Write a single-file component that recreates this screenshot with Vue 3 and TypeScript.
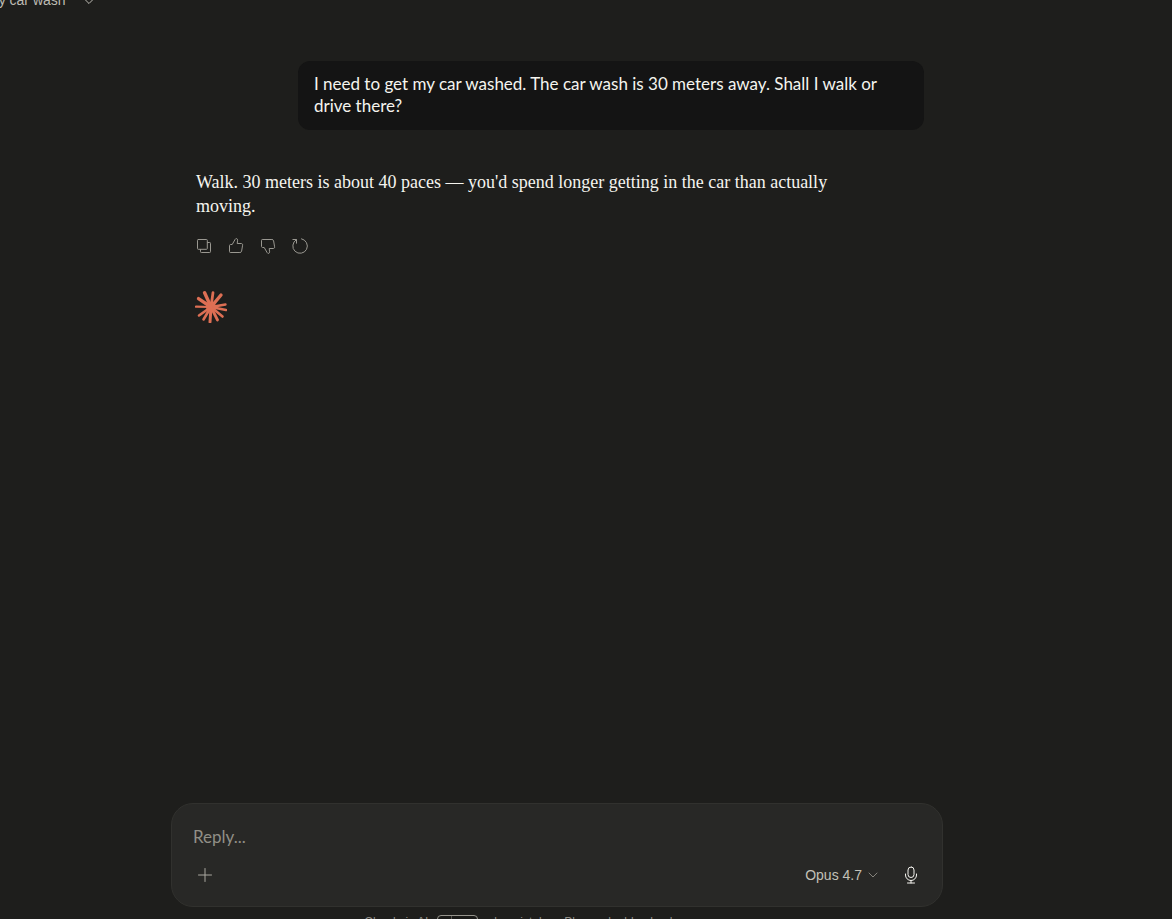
<script setup lang="ts">
import { ref } from 'vue'

const reply = ref('')
const rays: string[] = [
  'M16 16 L9.6 1.8', 'M16 16 L18 1.6', 'M16 16 L26 4', 'M16 16 L30.5 13.5',
  'M16 16 L31 19', 'M16 16 L27.5 25.5', 'M16 16 L22.5 29', 'M16 16 L15 31',
  'M16 16 L8.5 28.5', 'M16 16 L4 24.5', 'M16 16 L1 15.6', 'M16 16 L3.5 7.6',
]
const widths: number[] = [3.4, 2.8, 3.4, 2.4, 2.6, 2.6, 2.8, 3, 2.6, 2.6, 2.2, 3.4]
</script>

<template>
  <div class="page">
    <header class="topbar">
      <button class="title" type="button">
        <span>My car wash</span>
        <svg width="14" height="14" viewBox="0 0 14 14"><path d="M3 6.500l4 4 4-4" /></svg>
      </button>
    </header>

    <main class="thread">
      <p class="question">I need to get my car washed. The car wash is 30 meters away. Shall I walk or drive there?</p>
      <p class="answer">Walk. 30 meters is about 40 paces — you'd spend longer getting in the car than actually moving.</p>
      <div class="actions">
        <button type="button" aria-label="Copy">
          <svg width="20" height="20" viewBox="0 0 20 20"><path d="M4.300 3.500h8.200a.8.8 0 0 1 .8.8v8.200a.8.8 0 0 1-.8.8H4.300a.8.8 0 0 1-.8-.8V4.300a.8.8 0 0 1 .8-.8zM13.500 6.500h2.200a.8.8 0 0 1 .8.8v8.400a.8.8 0 0 1-.8.8H7.300a.8.8 0 0 1-.8-.8v-2.200" /></svg>
        </button>
        <button type="button" aria-label="Good response">
          <svg width="20" height="20" viewBox="0 0 20 20"><path d="M3.500 9.500C3.500 8.900 3.900 8.500 4.500 8.500H6.200L9.200 3.300C9.800 2 11.800 2.500 11.600 4.200L11.200 7.500h4.100c1 0 1.500.8 1.300 1.700l-1 6c-.2.900-.8 1.300-1.700 1.300H4.200a.7.7 0 0 1-.7-.7z" /></svg>
        </button>
        <button type="button" aria-label="Bad response">
          <svg width="20" height="20" viewBox="0 0 20 20"><path d="M3.500 10.500C3.500 11.100 3.900 11.500 4.500 11.500H6.200L9.200 16.700C9.800 18 11.800 17.500 11.600 15.800L11.200 12.500h4.100c1 0 1.500-.8 1.300-1.700l-1-6c-.2-.9-.8-1.300-1.700-1.300H4.200a.7.7 0 0 0-.7.7z" /></svg>
        </button>
        <button type="button" aria-label="Retry">
          <svg width="20" height="20" viewBox="0 0 20 20"><path d="M11.500 2.800A7.300 7.300 0 1 1 6.300 3.700M2.900 3.500H6.500V7.200" /></svg>
        </button>
      </div>
      <svg class="burst" width="32" height="32" viewBox="0 0 32 32" aria-hidden="true">
        <circle cx="16" cy="16" r="5" />
        <path v-for="(d, i) in rays" :key="d" :d="d" :stroke-width="widths[i]" />
      </svg>
    </main>

    <footer class="dock">
      <form class="composer" @submit.prevent>
        <input v-model="reply" type="text" aria-label="Reply" placeholder="Reply..." />
        <div class="tools">
          <button class="add" type="button" aria-label="Add content">
            <svg width="20" height="20" viewBox="0 0 20 20"><path d="M10 3.500v13M3.500 10h13" /></svg>
          </button>
          <button class="model" type="button">
            <span>Opus 4.7</span>
            <svg width="12" height="12" viewBox="0 0 12 12"><path d="M2 4l4 4 4-4" /></svg>
          </button>
          <button class="mic" type="button" aria-label="Dictate">
            <svg width="20" height="20" viewBox="0 0 20 20"><rect x="7" y="2" width="6" height="10.500" rx="3" /><path d="M4.500 9v1a5.500 5.500 0 0 0 11 0V9M10 15.500v2.500M6.500 18h7" /></svg>
          </button>
        </div>
      </form>
      <p class="notice">Claude is AI and can make mistakes. Please double-check responses.<span class="chip"><i></i></span></p>
    </footer>
  </div>
</template>

<style>
body {
  margin: 0;
  background: #1e1e1c;
}
</style>

<style scoped>
.page {
  display: flex;
  flex-direction: column;
  height: 100vh;
  overflow: hidden;
  box-sizing: border-box;
  padding-right: 58px;
  background: #1e1e1c;
  color: #f5f4ef;
  font-family: "Liberation Sans", sans-serif;
  font-size: 16px;
}
button {
  display: flex;
  align-items: center;
  justify-content: center;
  padding: 0;
  border: 0;
  background: none;
  color: inherit;
  font: inherit;
}
svg {
  display: block;
  fill: none;
  stroke: currentColor;
  stroke-linecap: round;
  stroke-linejoin: round;
}
.topbar {
  flex: none;
  height: 12px;
}
.title {
  gap: 16px;
  margin: -10px 0 0 -13px;
  color: #bdbbb3;
  font-size: 14px;
  line-height: 20px;
}
.thread {
  flex: 1;
  display: flex;
  flex-direction: column;
  box-sizing: border-box;
  width: 100%;
  max-width: 772px;
  margin: 0 auto;
  padding: 49px 19px 0 25px;
}
.question {
  align-self: flex-end;
  box-sizing: border-box;
  max-width: 86%;
  margin: 0;
  padding: 12px 36px 13px 16px;
  border-radius: 12px;
  background: #141414;
  font-family: Lato, sans-serif;
  font-size: 17px;
  line-height: 22px;
}
.answer {
  margin: 40px 48px 0 0;
  font-family: "Liberation Serif", serif;
  font-size: 18px;
  line-height: 24px;
}
.actions {
  display: flex;
  margin: 12px 0 0 -8px;
  color: #9a9891;
}
.actions button {
  width: 32px;
  height: 32px;
}
.burst {
  margin: 29px 0 0 -1px;
  color: #dd6f54;
}
.burst circle {
  fill: currentColor;
  stroke: none;
}
.dock {
  flex: none;
  box-sizing: border-box;
  width: 100%;
  max-width: 772px;
  margin: 0 auto;
}
.composer {
  padding: 20px 16px 15px 21px;
  border: 1px solid #31312e;
  border-radius: 22px;
  background: #282826;
}
input {
  display: block;
  width: 100%;
  height: 24px;
  padding: 0;
  border: 0;
  outline: 0;
  background: none;
  color: inherit;
  font: 17px Lato, sans-serif;
}
input::placeholder {
  color: #918f86;
  opacity: 1;
}
.tools {
  display: flex;
  align-items: center;
  margin-top: 11px;
  height: 32px;
}
.add {
  width: 24px;
  height: 32px;
  color: #a9a79f;
}
.model {
  gap: 5px;
  margin-left: auto;
  color: #c3c1b8;
  font-size: 14px;
}
.model svg {
  color: #85837c;
}
.mic {
  width: 30px;
  height: 32px;
  margin-left: 17px;
}
.notice {
  position: relative;
  height: 10px;
  margin: 0;
  padding: 2px 12px 0 0;
  overflow: hidden;
  color: #8f8d85;
  font-size: 12px;
  line-height: 26px;
  text-align: center;
}
.chip {
  position: absolute;
  top: 8px;
  left: 266px;
  width: 39px;
  height: 18px;
  border: 1px solid #96948c;
  border-radius: 4px;
  background: #1a1a18;
}
.chip i {
  display: block;
  width: 13px;
  height: 100%;
  border-right: 1px solid #55534e;
}
</style>
